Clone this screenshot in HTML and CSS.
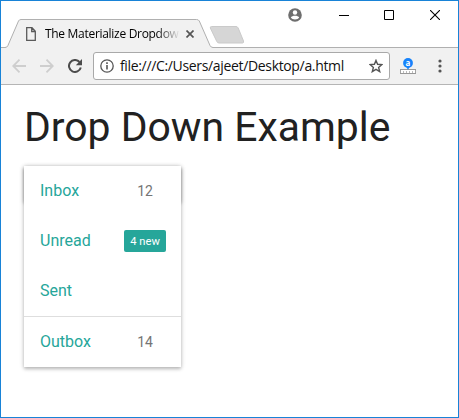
FILE: index.html
```html
<!DOCTYPE html>
<html lang="en">
<head>
<meta charset="utf-8">
<title>The Materialize Dropdown Example</title>
<link rel="stylesheet" href="styles.css">
</head>
<body>
<div class="window">
  <header class="tabstrip">
    <div class="tab">
      <svg class="tab-shape" width="212" height="30" viewBox="0 0 212 30"><path d="M0 28.5H4Q6 28.5 6.800 26.800L17.500 2Q18.200 .5 20 .5H195.500Q197.500 .5 198.300 2L209 26.500Q210 28.500 212 28.500V30H0Z" fill="#f1f1f1"/><path d="M0 28.500H4Q6 28.500 6.800 26.800L17.500 2Q18.200 .5 20 .5H195.500Q197.500 .5 198.300 2L209 26.500Q210 28.500 212 28.500" fill="none" stroke="#b0b0b0"/></svg>
      <svg class="file-icon" width="10" height="14" viewBox="0 0 10 14" fill="none" stroke="#5a5a5a" stroke-width="1.300"><path d="M.7 .7H6L9.300 4.200V13.300H.7ZM5.700 .7V4.500H9.300"/></svg>
      <span class="tab-title">The Materialize Dropdow</span>
      <svg class="tab-close" width="8" height="8" viewBox="0 0 8 8" stroke="#555" stroke-width="1.700"><path d="M.5 .5L7.500 7.500M7.500 .5L.5 7.500"/></svg>
    </div>
    <svg class="new-tab" width="36" height="18" viewBox="0 0 36 18"><path d="M2.500 .5H27Q28.500 .5 29.200 2L34.500 15Q35 17 33.500 17H10Q8.500 17 7.800 15.500L1.300 2Q1 .5 2.500 .5Z" fill="#d6d6d6" stroke="#cacaca"/></svg>
    <div class="controls">
      <svg width="14" height="14" viewBox="0 0 14 14"><circle cx="7" cy="7" r="6.800" fill="#6e6e6e"/><circle cx="7" cy="4.500" r="2.200" fill="#fff"/><path d="M2.800 9.500C4 7.200 10 7.200 11.200 9.500C9.800 12 4.200 12 2.800 9.500Z" fill="#fff"/></svg>
      <svg width="10" height="10" viewBox="0 0 10 10"><path d="M0 5.500H10" stroke="#000"/></svg>
      <svg width="10" height="10" viewBox="0 0 10 10"><path d="M.5 .5H9.500V9.500H.5Z" fill="none" stroke="#000"/></svg>
      <svg width="10" height="10" viewBox="0 0 10 10"><path d="M0 0L10 10M10 0L0 10" stroke="#000" stroke-width="1.100"/></svg>
    </div>
  </header>
  <nav class="toolbar">
    <svg class="back" width="14" height="14" viewBox="0 0 14 14" fill="none" stroke="#cecece" stroke-width="1.800"><path d="M14 7H1.500M7.500 .7L1.200 7L7.500 13.300"/></svg>
    <svg class="forward" width="14" height="14" viewBox="0 0 14 14" fill="none" stroke="#cecece" stroke-width="1.800"><path d="M0 7H12.500M6.500 .7L12.800 7L6.500 13.300"/></svg>
    <svg class="reload" width="14" height="14" viewBox="0 0 14 14"><path d="M11.500 3A6 6 0 1 0 12.800 8.500" fill="none" stroke="#4c4c4c" stroke-width="2"/><path d="M14 0V6.200H7.800Z" fill="#4c4c4c"/></svg>
    <div class="address">
      <svg width="14" height="14" viewBox="0 0 14 14"><circle cx="7" cy="7" r="6.200" fill="none" stroke="#555" stroke-width="1.300"/><path d="M7 6V10.500M7 3.300V5" stroke="#555" stroke-width="1.600"/></svg>
      <span class="url">file:///C:/Users/ajeet/Desktop/a.html</span>
      <svg class="star" width="14" height="14" viewBox="0 0 14 14"><path d="M7 1.400L8.600 5.300L12.900 5.600L9.600 8.400L10.700 12.600L7 10.300L3.300 12.600L4.400 8.400L1.100 5.600L5.400 5.300Z" fill="none" stroke="#555" stroke-width="1.400"/></svg>
    </div>
    <svg class="extension" width="16" height="17" viewBox="0 0 16 17"><path d="M.5 11.500H15.500V15.500H.5Z" fill="#fff" stroke="#a3a3a3"/><path d="M0 11.500H16M0 15.500H16" stroke="#999"/><path d="M3.500 13V15M6.500 13V15M9.500 13V15M12.500 13V15" stroke="#bbb"/><path d="M6 8L8 12L10 8Z" fill="#1683fb"/><circle cx="8" cy="5" r="4.900" fill="#1683fb"/><text x="8" y="7.500" class="extension-letter">a</text></svg>
    <svg class="more" width="4" height="14" viewBox="0 0 4 14" fill="#555"><circle cx="2" cy="2" r="1.600"/><circle cx="2" cy="7" r="1.600"/><circle cx="2" cy="12" r="1.600"/></svg>
  </nav>
  <main class="page">
    <h1>Drop Down Example</h1>
    <div class="dropdown">
      <div class="trigger"></div>
      <ul class="menu">
        <li><a>Inbox</a><span class="badge">12</span></li>
        <li><a>Unread</a><span class="badge new">4 new</span></li>
        <li><a>Sent</a></li>
        <li class="divider"></li>
        <li><a>Outbox</a><span class="badge">14</span></li>
      </ul>
    </div>
  </main>
</div>
</body>
</html>
```
FILE: styles.css
```css
* { box-sizing: border-box; }
body { margin: 0; background: #fff; }
svg { display: block; flex: none; }
.window {
  width: 459px;
  height: 418px;
  border: 1px solid #1883d7;
  overflow: hidden;
  font-family: Roboto, "Liberation Sans", sans-serif;
}
.tabstrip {
  height: 47px;
  padding-top: 18px;
  display: flex;
  background: linear-gradient(#b0b0b0, #b0b0b0) 0 46px / 100% 1px no-repeat;
}
.tab {
  position: relative;
  width: 209px;
  height: 29px;
  padding: 1px 0 0 24px;
  display: flex;
  align-items: center;
}
.tab-shape { position: absolute; left: 0; top: 0; }
.file-icon { position: relative; margin-left: 1px; }
.tab-title {
  position: relative;
  width: 135px;
  margin-left: 9px;
  white-space: nowrap;
  font: 12px/18px "Open Sans", "Noto Sans", sans-serif;
  letter-spacing: -0.3px;
  color: #000;
  mask-image: linear-gradient(90deg, #000 112px, transparent 135px);
}
.tab-close { position: relative; margin-left: 6px; }
.new-tab { margin: 7px 0 0 -1px; }
.controls {
  height: 14px;
  margin: -11px 0 0 43px;
  display: flex;
  align-items: center;
}
.controls svg + svg { margin-left: 37px; }
.controls svg:nth-child(3) { margin-left: 35px; }
.controls svg:nth-child(4) { margin-left: 36px; }
.toolbar {
  height: 37px;
  padding-left: 11px;
  display: flex;
  align-items: center;
  background: #f1f1f1;
  border-bottom: 1px solid #b5b5b5;
}
.forward { margin-left: 14px; }
.reload { margin-left: 14px; }
.address {
  width: 297px;
  height: 28px;
  margin-left: 11px;
  padding: 0 6px;
  display: flex;
  align-items: center;
  border: 1px solid #a9a9a9;
  border-radius: 3px;
  background: #fff;
}
.url {
  flex: 1;
  margin-left: 6px;
  white-space: nowrap;
  font: 14px/20px "Open Sans", "Noto Sans", sans-serif;
  letter-spacing: -0.34px;
  color: #111;
}
.extension { margin-left: 10px; }
.extension-letter {
  font: bold 8px "Open Sans", sans-serif;
  fill: #fff;
  text-anchor: middle;
}
.more { margin-left: 22px; }
.page { padding: 17px 23px; }
h1 {
  margin: 0;
  font-size: 40.88px;
  line-height: 50px;
  font-weight: 400;
  white-space: nowrap;
  color: #212121;
}
.dropdown { position: relative; width: 157px; margin-top: 14px; }
.trigger {
  position: absolute;
  inset: 0 0 auto;
  height: 36px;
  border-radius: 2px;
  box-shadow: 0 2px 3px rgba(0,0,0,.2), 0 1px 5px rgba(0,0,0,.22);
}
.menu {
  position: relative;
  margin: 0;
  padding: 0;
  list-style: none;
  background: #fff;
  box-shadow: 0 2px 3px rgba(0,0,0,.17), 0 1px 5px rgba(0,0,0,.2);
}
.menu li {
  height: 50px;
  padding: 0 15px 0 16px;
  display: flex;
  align-items: center;
  justify-content: space-between;
}
.menu .divider { height: 1px; background: #dedede; }
.menu a { font-size: 16px; line-height: 22px; color: #26a69a; }
.badge {
  width: 42px;
  height: 22px;
  text-align: center;
  font-size: 14px;
  line-height: 22px;
  color: #757575;
}
.badge.new {
  border-radius: 2px;
  background: #26a69a;
  color: #fff;
  font-size: 11.2px;
  line-height: 23px;
}
```
